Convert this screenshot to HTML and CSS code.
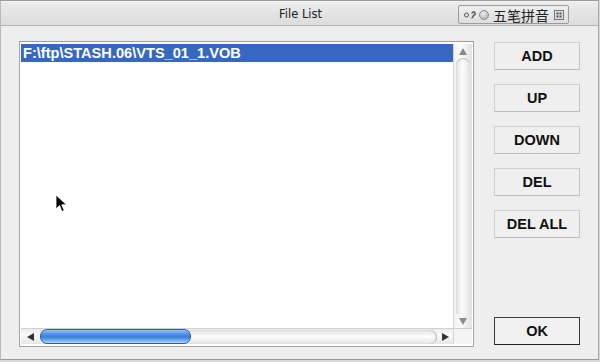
FILE: index.html
```html
<!DOCTYPE html>
<html>
<head>
<meta charset="utf-8">
<link rel="stylesheet" href="styles.css">
</head>
<body>
<div class="window">
  <div class="titlebar">
    <span class="title">File List</span>
    <div class="ime">
      <svg class="ime-dots" width="14" height="10" viewBox="0 0 14 10"><circle cx="3.5" cy="5" r="2" fill="none" stroke="#555" stroke-width="1"/><path d="M9 3.5 a1.6 1.6 0 1 1 1.6 1.6 q0 2 -2 3" fill="none" stroke="#444" stroke-width="1.3"/></svg>
      <span class="ime-radio"></span>
      <span class="ime-text">五笔拼音</span>
      <svg class="ime-icon" width="10" height="10" viewBox="0 0 10 10"><rect x="0.5" y="0.5" width="9" height="9" fill="#ddd" stroke="#777"/><rect x="2.5" y="2.5" width="2" height="2" fill="#555"/><rect x="5.5" y="2.5" width="2" height="2" fill="#555"/><rect x="2.5" y="5.5" width="2" height="2" fill="#555"/><rect x="5.5" y="5.5" width="2" height="2" fill="#555"/></svg>
    </div>
  </div>
  <div class="content">
    <div class="listbox">
      <div class="list-area">
        <div class="item selected">F:\ftp\STASH.06\VTS_01_1.VOB</div>
      </div>
      <div class="vscroll">
        <div class="arrow-up"><svg width="8" height="7" viewBox="0 0 8 7"><path d="M4 0 L8 7 L0 7 Z" fill="#8a8a8a"/></svg></div>
        <div class="vtrack"></div>
        <div class="arrow-down"><svg width="8" height="7" viewBox="0 0 8 7"><path d="M0 0 L8 0 L4 7 Z" fill="#8a8a8a"/></svg></div>
      </div>
      <div class="hscroll">
        <div class="arrow-left"><svg width="7" height="8" viewBox="0 0 7 8"><path d="M0 4 L7 0 L7 8 Z" fill="#333"/></svg></div>
        <div class="htrack"><div class="thumb"></div></div>
        <div class="arrow-right"><svg width="7" height="8" viewBox="0 0 7 8"><path d="M0 0 L7 4 L0 8 Z" fill="#333"/></svg></div>
      </div>
      <div class="corner"></div>
    </div>
    <div class="buttons">
      <button class="btn">ADD</button>
      <button class="btn">UP</button>
      <button class="btn">DOWN</button>
      <button class="btn">DEL</button>
      <button class="btn">DEL ALL</button>
      <div class="spacer"></div>
      <button class="btn default">OK</button>
    </div>
  </div>
  <svg class="cursor" width="13" height="20" viewBox="0 0 13 20"><path d="M1 1 L1 15 L4.5 11.5 L7 17.5 L9.2 16.5 L6.8 10.8 L11.5 10.8 Z" fill="#000" stroke="#fff" stroke-width="0.8" stroke-linejoin="round"/></svg>
</div>
</body>
</html>
```
FILE: styles.css
```css
html, body {
  margin: 0;
  padding: 0;
  width: 600px;
  height: 362px;
  overflow: hidden;
  background: #d8d8d8;
}
.window {
  position: relative;
  width: 599px;
  height: 360px;
  box-sizing: border-box;
  border-top: 1px solid #9a9a9a;
  border-left: 1px solid #b8b8b8;
  border-right: 1px solid #a8a8a8;
  border-bottom: 1px solid #9a9a9a;
  background: #eeeeee;
  display: flex;
  flex-direction: column;
  font-family: "Liberation Sans", Arial, sans-serif;
}
.titlebar {
  height: 25px;
  flex: none;
  box-sizing: border-box;
  border-top: 1px solid #f4f4f4;
  border-bottom: 1px solid #b4b4b4;
  background: linear-gradient(#ececec, #dcdcdc);
  display: flex;
  align-items: center;
  justify-content: center;
  position: relative;
}
.title {
  font-family: "DejaVu Sans", sans-serif;
  font-size: 11.5px;
  color: #222;
  margin-left: 2px;
}
.ime {
  position: absolute;
  left: 457px;
  top: 3px;
  width: 111px;
  height: 19px;
  box-sizing: border-box;
  border: 1px solid #9c9c9c;
  border-radius: 2px;
  background: linear-gradient(#eeeeee, #dedede);
  display: flex;
  align-items: center;
  padding-left: 4px;
  gap: 2px;
}
.ime-dots { flex: none; }
.ime-radio {
  width: 10px;
  height: 10px;
  border-radius: 50%;
  border: 1px solid #8c8c8c;
  background: radial-gradient(circle at 40% 35%, #eee, #a8a8a8);
  box-sizing: border-box;
  flex: none;
}
.ime-text {
  font-family: "Noto Sans CJK SC", sans-serif;
  font-size: 14px;
  line-height: 16px;
  color: #222;
  margin-left: 2px;
}
.ime-icon { flex: none; margin-left: 3px; }

.content {
  flex: 1;
  display: flex;
  padding: 15px 18px 12px 18px;
  gap: 20px;
}
.listbox {
  width: 455px;
  flex: none;
  box-sizing: border-box;
  border: 1px solid #a6a6a6;
  border-top-color: #9a9a9a;
  background: #fff;
  padding: 2px 1px 2px 1px;
  display: grid;
  grid-template-columns: 1fr 19px;
  grid-template-rows: 1fr 16px;
}
.list-area {
  overflow: hidden;
}
.item {
  height: 18px;
  line-height: 18px;
  font-size: 14.6px;
  font-weight: bold;
  padding-left: 2px;
  white-space: nowrap;
  overflow: hidden;
}
.selected {
  background: #3768c0;
  color: #fff;
}
.vscroll {
  display: flex;
  flex-direction: column;
  background: linear-gradient(90deg, #f2f2f2, #fafafa 40%, #e2e2e2);
  border-left: 1px solid #d6d6d6;
}
.arrow-up, .arrow-down {
  height: 14px;
  display: flex;
  align-items: center;
  justify-content: center;
  flex: none;
}
.vtrack {
  flex: 1;
  margin: 0 2px;
  border-radius: 8px 8px 0 0;
  background: linear-gradient(90deg, #e0e0e0, #fdfdfd 45%, #e4e4e4);
  box-shadow: inset 0 1px 1px #b8b8b8;
}
.hscroll {
  display: flex;
  align-items: center;
  background: linear-gradient(#ececec, #fafafa 40%, #e6e6e6);
  border-top: 1px solid #d0d0d0;
}
.arrow-left {
  width: 19px;
  display: flex;
  justify-content: center;
  flex: none;
}
.arrow-right {
  width: 16px;
  display: flex;
  justify-content: center;
  flex: none;
}
.htrack {
  flex: 1;
  height: 14px;
  border-radius: 0 8px 8px 0;
  background: linear-gradient(#e0e0e0, #fdfdfd 45%, #e6e6e6);
  box-shadow: inset -1px 0 1px #b0b0b0;
  display: flex;
  align-items: center;
}
.thumb {
  width: 151px;
  height: 15px;
  box-sizing: border-box;
  border-radius: 7px;
  border: 1px solid #2a5da8;
  background: linear-gradient(#9cc4f2 0%, #4a8ee4 35%, #3d7fd8 55%, #7db6f4 85%, #b8dcfa 100%);
}
.corner {
  background: #f4f4f4;
  border-left: 1px solid #d6d6d6;
  border-top: 1px solid #d0d0d0;
}
.buttons {
  display: flex;
  flex-direction: column;
  gap: 14px;
  padding-top: 1px;
}
.btn {
  width: 86px;
  height: 28px;
  box-sizing: border-box;
  border: 1px solid #cfcfcf;
  border-bottom-color: #bdbdbd;
  border-right-color: #c6c6c6;
  background: #efefef;
  font-family: "Liberation Sans", Arial, sans-serif;
  font-weight: bold;
  font-size: 14.5px;
  color: #111;
  padding: 0;
  border-radius: 0;
}
.spacer { flex: 1; }
.btn.default {
  border: 1px solid #3a3a3a;
  border-bottom-color: #222;
  background: #f0f0f0;
  margin-bottom: 2px;
}
.cursor {
  position: absolute;
  left: 54px;
  top: 193px;
}
```
